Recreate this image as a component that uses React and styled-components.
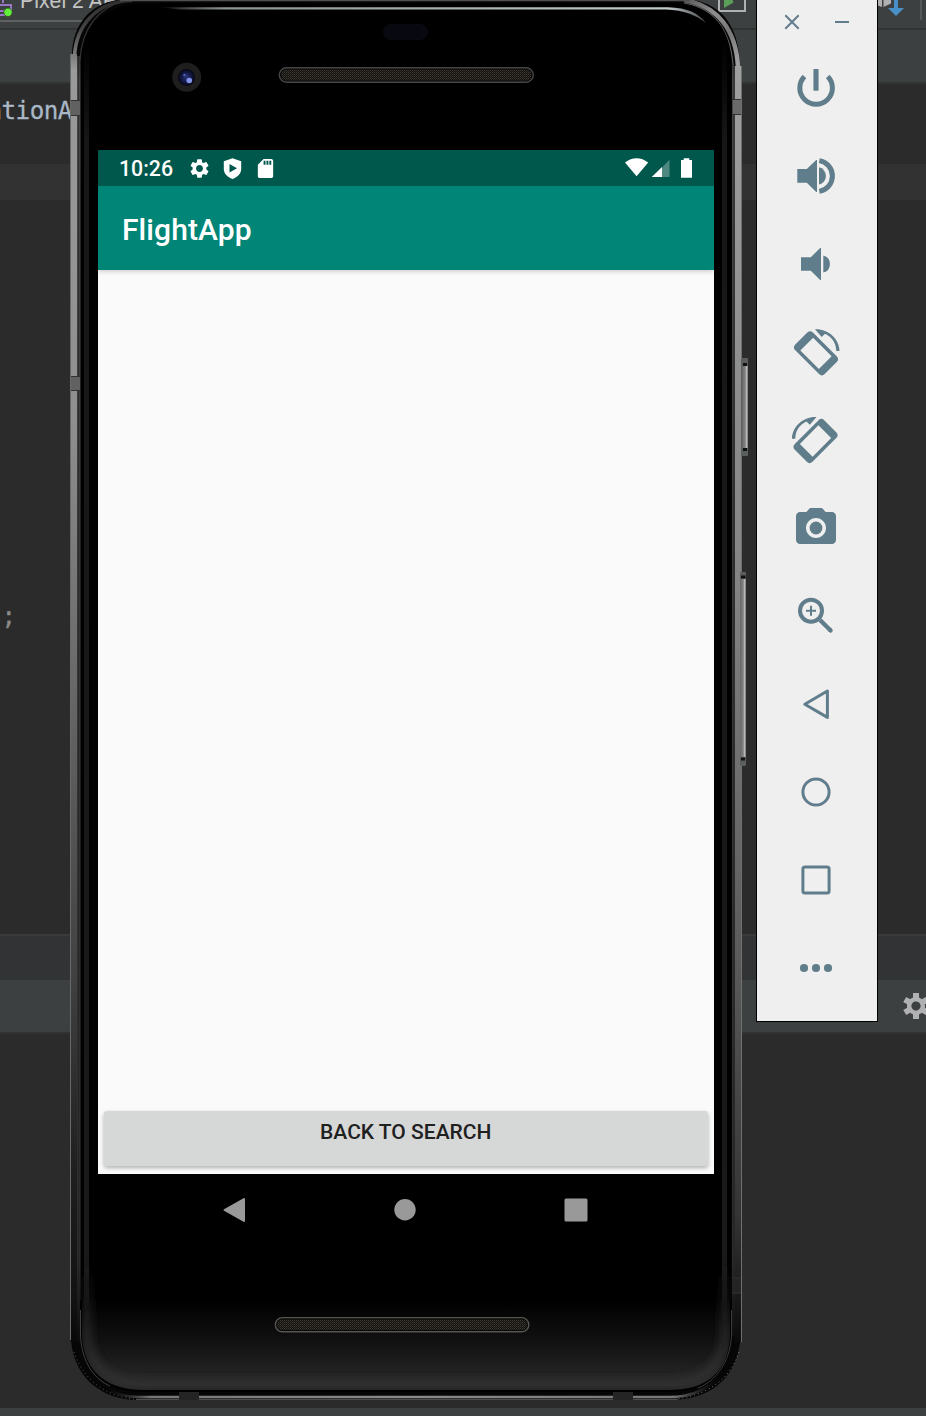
import React from "react";
import styled, { createGlobalStyle } from "styled-components";
import { MdSettings, MdSdCard, MdPhotoCamera } from "react-icons/md";

const GlobalStyle = createGlobalStyle`
  *, *::before, *::after { box-sizing: border-box; }
  body { margin: 0; background: #2b2b2b; overflow: hidden; }
  svg { display: block; flex: none; }
`;

const Desktop = styled.div`
  position: relative;
  width: 926px;
  height: 1416px;
  overflow: hidden;
`;

/* ---------- IDE window behind the emulator ---------- */

const Ide = styled.div`
  display: flex;
  flex-direction: column;
  height: 100%;
  background: #2b2b2b;
`;

const IdeBar = styled.div`
  display: flex;
  align-items: center;
  justify-content: flex-end;
  flex: none;
  height: ${(p) => p.$height}px;
  background: ${(p) => p.$color || "#3c4040"};
  border-top: ${(p) => (p.$top ? `2px solid ${p.$top}` : "none")};
  border-bottom: ${(p) => (p.$bottom ? `2px solid ${p.$bottom}` : "none")};
`;

const IdeToolbar = styled(IdeBar)`
  align-items: flex-start;
  justify-content: flex-start;
`;

const DeviceSelect = styled.div`
  display: flex;
  align-items: flex-end;
  width: 130px;
  height: 22px;
  border-bottom: 2px solid #5e6162;
`;

const DeviceName = styled.span`
  margin: 0 0 7px 6px;
  font: 400 21.3px/24px "Liberation Sans", Arial, sans-serif;
  white-space: nowrap;
  color: #c4c4c4;
`;

const ToolSlot = styled.div`
  margin-left: ${(p) => p.$gap}px;
`;

const Editor = styled.div`
  display: flex;
  flex-direction: column;
  flex: none;
  height: 850px;
`;

const CodeLine = styled.div`
  height: 36px;
  margin-top: ${(p) => p.$gap || 0}px;
  padding-left: ${(p) => p.$indent || 0}px;
  background: ${(p) => (p.$current ? "#323232" : "transparent")};
  color: ${(p) => p.$color || "#a9b7c6"};
  font: 400 24.2px/36px "DejaVu Sans Mono", monospace;
  letter-spacing: -0.5px;
  white-space: pre;
  -webkit-text-stroke: 0.3px currentColor;
`;

const Outdent = styled.span`
  margin-left: -12.5px;
`;

const Console = styled.div`
  flex: 1;
`;

/* ---------- Phone ---------- */

const Phone = styled.div`
  position: absolute;
  left: 68px;
  top: 0;
  width: 684px;
  height: 1402px;
`;

const Hull = styled.svg`
  position: absolute;
  inset: 0;
`;

const Face = styled.div`
  position: relative;
  display: flex;
  flex-direction: column;
  padding: 150px 38px 0 30px;
`;

const Screen = styled.div`
  display: flex;
  flex-direction: column;
  height: 1024px;
  background: #fafafa;
  font-family: Roboto, sans-serif;
`;

const StatusBar = styled.div`
  display: flex;
  align-items: center;
  flex: none;
  height: 36px;
  padding: 0 16px 0 21px;
  background: #00574b;
  color: #fff;
`;

const Clock = styled.span`
  width: 69px;
  padding-top: 2px;
  font-size: 21.3px;
  font-weight: 500;
  line-height: 36px;
`;

const StatusIcons = styled.div`
  display: flex;
  align-items: center;
  gap: ${(p) => p.$gap}px;
  margin-left: ${(p) => (p.$end ? "auto" : 0)};
`;

const AppBar = styled.header`
  position: relative;
  display: flex;
  align-items: center;
  flex: none;
  height: 84px;
  padding: 3px 24px 0;
  background: #008577;
  box-shadow: 0 1px 5px rgba(0, 0, 0, 0.22);
  clip-path: inset(0 0 -10px 0);
`;

const AppTitle = styled.h1`
  margin: 0;
  font-size: 30px;
  font-weight: 500;
  line-height: 36px;
  letter-spacing: 0.1px;
  color: #fff;
`;

const Content = styled.main`
  flex: 1;
  display: flex;
  flex-direction: column;
  justify-content: flex-end;
  padding: 0 6px 8px 5.5px;
`;

const BackButton = styled.button`
  height: 55px;
  padding: 0 0 13px;
  border: 0;
  border-radius: 3px;
  background: #d6d7d7;
  box-shadow: 0 2px 4px rgba(0, 0, 0, 0.3);
  color: #1f2020;
  font: 500 21px/24px Roboto, sans-serif;
`;

const NavBar = styled.nav`
  display: flex;
  align-items: center;
  height: 72px;
  padding: 0 124px 0 125px;
  justify-content: space-between;
`;

/* ---------- Emulator side toolbar ---------- */

const Toolbar = styled.aside`
  position: absolute;
  left: 756px;
  top: -1px;
  width: 122px;
  height: 1023px;
  background: #efefef;
  border: 1px solid #000;
`;

const WindowButtons = styled.div`
  display: flex;
  gap: 34px;
  height: 44px;
  align-items: center;
  padding-left: 27px;
`;

const ToolButton = styled.div`
  display: flex;
  align-items: center;
  justify-content: center;
  height: 88px;
  padding-right: 2px;
  color: #607d8b;
`;

function ToolIcon({ children }) {
  return (
    <svg width="48" height="48" viewBox="0 0 48 48" fill="none">
      {children}
    </svg>
  );
}

function RotateShape() {
  return (
    <>
      <g transform="translate(24 25.3) rotate(45)">
        <path
          fill="currentColor"
          fillRule="evenodd"
          d="M-16.8-12.5H16.8a4 4 0 0 1 4 4V8.5a4 4 0 0 1-4 4H-16.8a4 4 0 0 1-4-4V-8.5a4 4 0 0 1 4-4ZM-13.1-9V9H13.1V-9Z"
        />
      </g>
      <path fill="currentColor" d="M23 1.3C36 .6 47.5 11 47.5 23H44.3C44 14.5 39.5 8.5 33 5.8L29.700 9Z" />
    </>
  );
}

const tools = {
  power: (
    <ToolIcon>
      <path d="M35.7 12.5A16.3 16.3 0 1 1 12.5 12.5" stroke="currentColor" strokeWidth="5" />
      <path d="M24 5V26.7" stroke="currentColor" strokeWidth="5.1" />
    </ToolIcon>
  ),
  volumeUp: (
    <ToolIcon>
      <path fill="currentColor" d="M5.3 17H14.800L24.2 8H25V40H24.2L14.800 30.700H5.3Z" />
      <path fill="currentColor" d="M27 15.3A8.8 8.8 0 0 1 27 32.5Z" />
      <path d="M27.3 8.6A15.6 15.6 0 0 1 27.3 39.4" stroke="currentColor" strokeWidth="5" />
    </ToolIcon>
  ),
  volumeDown: (
    <ToolIcon>
      <path fill="currentColor" d="M9 17.2H18.800L28.2 8H29V40H28.2L18.800 30.800H9Z" />
      <path fill="currentColor" d="M31.3 15.4A8.9 8.9 0 0 1 31.3 32.6Z" />
    </ToolIcon>
  ),
  rotateLeft: (
    <ToolIcon>
      <RotateShape />
    </ToolIcon>
  ),
  rotateRight: (
    <ToolIcon>
      <g transform="translate(47.5 -0.3) scale(-1 1)">
        <RotateShape />
      </g>
    </ToolIcon>
  ),
  camera: <MdPhotoCamera size={48} />,
  zoom: (
    <ToolIcon>
      <circle cx="19" cy="18.7" r="11" stroke="currentColor" strokeWidth="4" />
      <path d="M14 18.7H24M19 13.7V23.7" stroke="currentColor" strokeWidth="2" />
      <path d="M28 28L38.600 38.600" stroke="currentColor" strokeWidth="4.3" />
      <path d="M38 38L38.600 38.600" stroke="currentColor" strokeWidth="4.3" strokeLinecap="round" />
    </ToolIcon>
  ),
  back: (
    <ToolIcon>
      <path d="M35.4 11V37.4L12.8 24.2Z" stroke="currentColor" strokeWidth="3" strokeLinejoin="round" />
    </ToolIcon>
  ),
  home: (
    <ToolIcon>
      <circle cx="24" cy="24" r="13.1" stroke="currentColor" strokeWidth="3" />
    </ToolIcon>
  ),
  overview: (
    <ToolIcon>
      <rect x="10.9" y="10.9" width="26.2" height="26.2" rx="2" stroke="currentColor" strokeWidth="3" />
    </ToolIcon>
  ),
  more: (
    <ToolIcon>
      <g fill="currentColor">
        <circle cx="12" cy="24" r="4.1" />
        <circle cx="24" cy="24" r="4.1" />
        <circle cx="36" cy="24" r="4.1" />
      </g>
    </ToolIcon>
  ),
};

function PhoneHull() {
  return (
    <Hull width="684" height="1402" viewBox="68 0 684 1402" fill="none">
      <defs>
        <linearGradient id="metal" gradientUnits="userSpaceOnUse" x1="0" y1="0" x2="0" y2="1400">
          <stop offset="0" stopColor="#2c2c2c" />
          <stop offset="0.02" stopColor="#444" />
          <stop offset="0.05" stopColor="#9a9a9a" />
          <stop offset="0.3" stopColor="#8f8f8f" />
          <stop offset="0.5" stopColor="#666" />
          <stop offset="0.7" stopColor="#404040" />
          <stop offset="0.84" stopColor="#1e1e1e" />
          <stop offset="0.93" stopColor="#121212" />
          <stop offset="0.97" stopColor="#040404" />
          <stop offset="1" stopColor="#1c1c1c" />
        </linearGradient>
        <linearGradient id="metalDark" gradientUnits="userSpaceOnUse" x1="0" y1="0" x2="0" y2="1400">
          <stop offset="0" stopColor="#0c0c0c" />
          <stop offset="0.06" stopColor="#474747" />
          <stop offset="0.5" stopColor="#353535" />
          <stop offset="0.9" stopColor="#2c2c2c" />
          <stop offset="0.96" stopColor="#0a0a0a" />
        </linearGradient>
        <linearGradient id="metalR" gradientUnits="userSpaceOnUse" x1="0" y1="50" x2="0" y2="1345">
          <stop offset="0" stopColor="#a0a0a0" />
          <stop offset="0.4" stopColor="#858585" />
          <stop offset="0.7" stopColor="#5b5b5b" />
          <stop offset="0.9" stopColor="#343434" />
          <stop offset="1" stopColor="#090909" />
        </linearGradient>
        <linearGradient id="cornerR" gradientUnits="userSpaceOnUse" x1="680" y1="0" x2="735" y2="60">
          <stop offset="0" stopColor="#555" />
          <stop offset="0.4" stopColor="#8f8f8f" />
          <stop offset="0.7" stopColor="#777" />
          <stop offset="1" stopColor="#9c9c9c" />
        </linearGradient>
        <linearGradient id="strip" gradientUnits="userSpaceOnUse" x1="0" y1="40" x2="0" y2="1330">
          <stop offset="0" stopColor="#171717" stopOpacity="0" />
          <stop offset="0.08" stopColor="#171717" />
          <stop offset="0.95" stopColor="#191919" />
          <stop offset="1" stopColor="#191919" stopOpacity="0" />
        </linearGradient>
        <linearGradient id="chin" gradientUnits="userSpaceOnUse" x1="0" y1="1300" x2="0" y2="1391">
          <stop offset="0" stopColor="#000" />
          <stop offset="0.45" stopColor="#111" />
          <stop offset="0.93" stopColor="#292929" />
          <stop offset="1" stopColor="#202020" />
        </linearGradient>
        <linearGradient id="glow" gradientUnits="userSpaceOnUse" x1="0" y1="1260" x2="0" y2="1384">
          <stop offset="0" stopColor="#333" stopOpacity="0" />
          <stop offset="0.75" stopColor="#303030" />
          <stop offset="1" stopColor="#303030" />
        </linearGradient>
        <linearGradient id="bottomRim" gradientUnits="userSpaceOnUse" x1="108" y1="0" x2="716" y2="0">
          <stop offset="0" stopColor="#333" stopOpacity="0" />
          <stop offset="0.07" stopColor="#777" />
          <stop offset="0.5" stopColor="#8a8a8a" />
          <stop offset="0.93" stopColor="#777" />
          <stop offset="1" stopColor="#333" stopOpacity="0" />
        </linearGradient>
        <linearGradient id="shine" gradientUnits="userSpaceOnUse" x1="160" y1="0" x2="706" y2="0">
          <stop offset="0" stopColor="#b4bcbf" stopOpacity="0" />
          <stop offset="0.12" stopColor="#8d9496" />
          <stop offset="0.93" stopColor="#c3cccd" />
          <stop offset="1" stopColor="#b4bcbf" stopOpacity="0.4" />
        </linearGradient>
        <linearGradient id="sideKey" x1="0" y1="0" x2="1" y2="0">
          <stop offset="0" stopColor="#666" />
          <stop offset="0.55" stopColor="#858585" />
          <stop offset="0.75" stopColor="#b8b8b8" />
          <stop offset="1" stopColor="#777" />
        </linearGradient>
        <radialGradient id="lens" cx="0.5" cy="0.5" r="0.5">
          <stop offset="0" stopColor="#2b3577" />
          <stop offset="0.55" stopColor="#141a48" />
          <stop offset="1" stopColor="#05060f" />
        </radialGradient>
        <pattern id="mesh" width="2" height="2" patternUnits="userSpaceOnUse">
          <rect width="2" height="2" fill="#14120f" />
          <rect width="1" height="1" fill="#3e3a34" />
          <rect x="1" y="1" width="1" height="1" fill="#2b2823" />
        </pattern>
        <filter id="soft" filterUnits="userSpaceOnUse" x="68" y="1180" width="684" height="220">
          <feGaussianBlur stdDeviation="5" />
        </filter>
        <clipPath id="glass">
          <path d="M81 64C81 24 104 3 150 3H670C708 3 731 24 731 64V1336C731 1374 706 1391 668 1391H144C106 1391 81 1374 81 1336Z" />
        </clipPath>
      </defs>

      <path
        fill="#060606"
        d="M70 54H72C73 22 93-1 130-1H680C718-1 739 22 740 66H742V1342H740C736 1380 708 1400 670 1400H138C102 1400 74 1378 71 1340H70Z"
      />
      <path d="M74.500 56C76 26 96 1 132 .5" stroke="url(#metal)" strokeWidth="3.6" />
      <path d="M80 60C82 28 98 8 124 1" stroke="#363636" strokeWidth="1.2" />
      <path d="M684 0C718 6 736 30 738 67" stroke="url(#cornerR)" strokeWidth="4.500" />
      <path d="M684 3C714 8 732 30 733.500 72" stroke="#5c5c5c" strokeWidth="1.2" />

      <rect x="70.500" y="54" width="6.500" height="1288" fill="url(#metal)" />
      <rect x="77" y="56" width="3.5" height="1286" fill="url(#metalDark)" />
      <rect x="78" y="56" width="1" height="1240" fill="#222" fillOpacity="0.6" />
      <rect x="70" y="54" width="1" height="1286" fill="#686a6a" />
      <rect x="732" y="66" width="3" height="1270" fill="url(#metalDark)" />
      <rect x="733.500" y="66" width="1" height="1240" fill="#1c1c1c" fillOpacity="0.6" />
      <rect x="735" y="66" width="6" height="1276" fill="url(#metalR)" />
      <rect x="741" y="66" width="1" height="1276" fill="#707070" />

      <g>
        <rect x="741" y="358" width="7" height="98" rx="1" fill="#5a5f5c" />
        <rect x="742" y="366" width="6" height="82" fill="url(#sideKey)" />
        <path d="M743 364.500H747M743 449.500H747" stroke="#111" strokeWidth="3" />
        <rect x="740" y="572" width="6" height="194" rx="1" fill="#5a5f5c" />
        <rect x="740" y="579" width="6" height="178" fill="url(#sideKey)" />
        <path d="M741 577H745.500M741 759H745" stroke="#111" strokeWidth="3" />
      </g>

      <g clipPath="url(#glass)">
        <rect x="80" y="0" width="652" height="1392" fill="#000" />
        <rect x="80" y="1300" width="652" height="91" fill="url(#chin)" />
        <rect x="84" y="40" width="5" height="1290" fill="url(#strip)" />
        <rect x="722" y="40" width="5" height="1290" fill="url(#strip)" />
        <path
          d="M87 1240V1335C88 1368 112 1384 144 1384H668C702 1384 724 1366 725 1335V1240"
          stroke="url(#glow)"
          strokeWidth="8"
          filter="url(#soft)"
        />
      </g>

      <path d="M81 1300V1336C83 1374 108 1391 144 1391H668C706 1391 729 1374 731 1336V1300" stroke="#000" strokeWidth="2" />
      <path d="M80.500 1310V1336C82 1362 94 1379 110 1386" stroke="#3c4145" strokeWidth="1" />
      <path d="M731.500 1310V1336C730 1362 716 1381 698 1388" stroke="#3c3c3c" strokeWidth="1" />
      <path d="M74 1352C83 1380 106 1397 138 1399.500" stroke="#555" strokeWidth="1" strokeDasharray="1 3" />
      <path d="M739 1352C730 1380 706 1397 670 1399.500" stroke="#777" strokeWidth="1" strokeDasharray="1 3" />
      <path d="M106 1388C118 1396 130 1397 140 1397H670C690 1397 706 1389 716 1380" stroke="url(#bottomRim)" strokeWidth="2.6" />
      <path d="M136 1399.3H678" stroke="#4e4e4e" strokeWidth="1.3" />

      <path d="M160 7.3H668C688 8 698 13 706 23C696 15 684 10.2 666 9.5H180Z" fill="url(#shine)" />
      <path d="M120 .5H690" stroke="#505050" strokeWidth="1.5" />

      <g fill="#555">
        <path fill="#616161" d="M71 100H80V116H71ZM71 376H80V391H71Z" />
        <path fill="#6a6a6a" d="M733 99H741V115H733Z" />
        <path fill="#242424" d="M732 1279H741V1293H732ZM179 1392H199V1400H179ZM613 1392H633V1400H613Z" />
      </g>
      <path
        d="M71 100.500H80M71 115.500H80M71 376.500H80M71 390.500H80M732 99.500H741M732 114.500H741M732 1278H741M732 1293H741"
        stroke="#333"
      />

      <rect x="383" y="24" width="45" height="16" rx="8" fill="#080810" />
      <circle cx="186.7" cy="77.3" r="14.5" fill="#1f1e1e" />
      <circle cx="186.5" cy="77.5" r="8.5" fill="url(#lens)" />
      <circle cx="189.3" cy="80.5" r="2.8" fill="#8394e8" />
      <circle cx="184.5" cy="75" r="1.3" fill="#4a59b8" />

      <rect x="279.3" y="67.8" width="254" height="14.4" rx="7.2" fill="#080808" stroke="#464646" strokeWidth="1.4" />
      <rect x="281" y="69.500" width="250.500" height="11" rx="5.500" fill="url(#mesh)" />
      <rect x="275.3" y="1317.6" width="253.5" height="14.2" rx="7.1" fill="#080808" stroke="#56554f" strokeWidth="1.4" />
      <rect x="277" y="1319.500" width="250" height="10.500" rx="5.200" fill="url(#mesh)" />
    </Hull>
  );
}

export default function App() {
  return (
    <Desktop>
      <GlobalStyle />
      <Ide>
        <IdeToolbar $height={30} $bottom="#323232">
          <DeviceSelect>
            <svg width="14" height="20" viewBox="0 0 14 20">
              <path d="M0 5H11V11M0 11H4M0 15H5M3 0V3" stroke="#9876c4" strokeWidth="2" fill="none" />
              <circle cx="8" cy="12.3" r="4.2" fill="#62f03a" stroke="#2c4a22" strokeWidth="0.8" />
            </svg>
            <DeviceName>Pixel 2 API</DeviceName>
          </DeviceSelect>
          <ToolSlot $gap={588}>
            <svg width="28" height="13" viewBox="0 0 28 13" fill="none">
              <path d="M1 0V11H27V0" stroke="#afb1b3" strokeWidth="2" />
              <path d="M6 0H14.5L15.5 2.5L6 8Z" fill="#5a9e57" />
            </svg>
          </ToolSlot>
          <ToolSlot $gap={132}>
            <svg width="27" height="17" viewBox="0 0 27 17">
              <path d="M0 0H4V7L0 5.5ZM5.5 0H13V3.5L5.5 7Z" fill="#afb1b3" />
              <path d="M16 0H20V8H26L18 16L10 8H16Z" fill="#4a90c8" />
            </svg>
          </ToolSlot>
          <ToolSlot $gap={15}>
            <svg width="2" height="20" viewBox="0 0 2 20">
              <path d="M1 0V20" stroke="#555759" strokeWidth="2" />
            </svg>
          </ToolSlot>
        </IdeToolbar>
        <IdeBar $height={54} $bottom="#323232" />
        <Editor>
          <CodeLine $gap={9}>
            <Outdent>ationA</Outdent>
          </CodeLine>
          <CodeLine $gap={35} $current />
          <CodeLine $gap={399} $indent={1.5} $color="#8c8c8c">
            ;
          </CodeLine>
        </Editor>
        <IdeBar $height={46} $color="#313335" $top="#3a3a3d" />
        <IdeBar $height={54} $bottom="#323232">
          <svg width="23" height="26" viewBox="0 0 23 26">
            <g transform="translate(13 13) rotate(30)">
              <path
                fill="#afb1b3"
                fillRule="evenodd"
                d="M0-9A9 9 0 1 1 0 9A9 9 0 1 1 0-9ZM0-4.6A4.6 4.6 0 1 0 0 4.6A4.6 4.6 0 1 0 0-4.6Z"
              />
              {[30, 90, 150, 210, 270, 330].map((a) => (
                <rect key={a} x="-3" y="-13" width="6" height="6" fill="#afb1b3" transform={`rotate(${a})`} />
              ))}
            </g>
          </svg>
        </IdeBar>
        <Console />
        <IdeBar $height={8} />
      </Ide>

      <Phone>
        <PhoneHull />
        <Face>
          <Screen>
            <StatusBar>
              <Clock>10:26</Clock>
              <StatusIcons $gap={10}>
                <MdSettings size={23} />
                <svg width="23" height="23" viewBox="0 0 23 23">
                  <path
                    fill="#fff"
                    fillRule="evenodd"
                    d="M11.500 1.200L20.200 4.200V12C20.200 16.500 16.500 20.300 11.500 22C6.500 20.300 2.800 16.500 2.800 12V4.200ZM8.500 7V15.500L16 11.200Z"
                  />
                </svg>
                <MdSdCard size={23} />
              </StatusIcons>
              <StatusIcons $end>
                <svg width="75" height="24" viewBox="0 0 75 24" fill="#fff">
                  <path d="M2 6.500C9 .700 18 .700 25.200 6.500L13.600 20.300Z" />
                  <path d="M46.500 3.800V21H39V11.500Z" fillOpacity="0.3" />
                  <path d="M39 11V21H28.700Z" />
                  <path d="M60.700 2.200H66.300V4H69V21.800H58V4H60.700Z" />
                </svg>
              </StatusIcons>
            </StatusBar>
            <AppBar>
              <AppTitle>FlightApp</AppTitle>
            </AppBar>
            <Content>
              <BackButton>BACK TO SEARCH</BackButton>
            </Content>
          </Screen>
          <NavBar>
            <svg width="23" height="26" viewBox="0 0 23 26">
              <path d="M21 2V24L1.500 13Z" fill="#999" stroke="#999" strokeWidth="2" strokeLinejoin="round" />
            </svg>
            <svg width="22" height="22" viewBox="0 0 22 22">
              <circle cx="11" cy="10.800" r="10.700" fill="#999" />
            </svg>
            <svg width="26" height="24" viewBox="0 0 26 24">
              <rect x="0.500" y="0.600" width="23" height="22.800" rx="1.500" fill="#999" />
            </svg>
          </NavBar>
        </Face>
      </Phone>

      <Toolbar>
        <WindowButtons>
          <svg width="16" height="16" viewBox="0 0 16 16">
            <path d="M1.300 1.300L14.700 14.700M14.700 1.300L1.300 14.700" stroke="#607d8b" strokeWidth="2" />
          </svg>
          <svg width="16" height="16" viewBox="0 0 16 16">
            <path d="M1 8H15" stroke="#607d8b" strokeWidth="2" />
          </svg>
        </WindowButtons>
        {Object.entries(tools).map(([name, icon]) => (
          <ToolButton key={name}>{icon}</ToolButton>
        ))}
      </Toolbar>
    </Desktop>
  );
}
